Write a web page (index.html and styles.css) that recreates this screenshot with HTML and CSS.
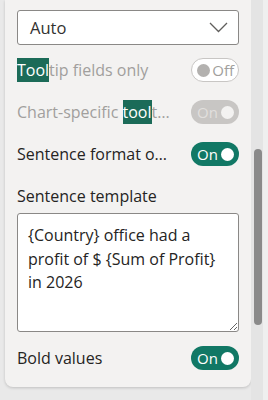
FILE: index.html
```html
<!DOCTYPE html>
<html>
<head>
<meta charset="utf-8">
<link rel="stylesheet" href="styles.css">
</head>
<body>
<div class="frame">
  <div class="panel">
    <div class="select">
      <span>Auto</span>
      <svg class="chev" width="19" height="11" viewBox="0 0 19 11"><path d="M1 1 L9.5 9.5 L18 1" fill="none" stroke="#605e5c" stroke-width="1.3"/></svg>
    </div>
    <div class="row">
      <span class="label dim"><mark>Tool</mark>tip fields only</span>
      <span class="toggle off"><i class="knob"></i><b>Off</b></span>
    </div>
    <div class="row">
      <span class="label dim">Chart-specific <mark>tool</mark>t…</span>
      <span class="toggle disabled"><b>On</b><i class="knob"></i></span>
    </div>
    <div class="row">
      <span class="label">Sentence format o…</span>
      <span class="toggle on"><b>On</b><i class="knob"></i></span>
    </div>
    <div class="field-label">Sentence template</div>
    <textarea class="area">{Country} office had a profit of $ {Sum of Profit} in 2026</textarea>
    <div class="row">
      <span class="label">Bold values</span>
      <span class="toggle on"><b>On</b><i class="knob"></i></span>
    </div>
  </div>
  <div class="scroll"><div class="thumb"></div></div>
  <div class="edge"></div>
</div>
</body>
</html>
```

FILE: styles.css
```css
* { box-sizing: border-box; }
html, body { margin: 0; padding: 0; }
body {
  width: 268px;
  height: 400px;
  overflow: hidden;
  background: #e9e9e9;
  font-family: "Open Sans", "Noto Sans", sans-serif;
  color: #252423;
}
.frame {
  display: flex;
  height: 400px;
}
.panel {
  margin-left: 5px;
  width: 246px;
  flex: none;
  height: 387px;
  background: #f3f2f1;
  border-radius: 0 0 8px 8px;
  box-shadow: 0 1px 3px rgba(0,0,0,0.18);
  padding: 10px 12px 0 12px;
  display: flex;
  flex-direction: column;
}
.select {
  height: 35px;
  flex: none;
  background: #fff;
  border: 1px solid #8a8886;
  border-radius: 3px;
  display: flex;
  align-items: center;
  justify-content: space-between;
  padding: 0 9px 0 12px;
  font-size: 16.5px;
  color: #323130;
  margin-bottom: 4px;
}
.chev { margin-right: 1px; }
.row {
  height: 42px;
  flex: none;
  display: flex;
  align-items: center;
  justify-content: space-between;
  font-size: 16px;
}
.label { white-space: nowrap; line-height: 24px; }
.dim { color: #a19f9d; }
mark {
  background: #1b6b58;
  color: #fff;
  display: inline-block;
  line-height: 24px;
}
.toggle {
  width: 48px;
  height: 24px;
  flex: none;
  border-radius: 12px;
  display: flex;
  align-items: center;
  justify-content: space-between;
  padding: 0 5px 0 6px;
  font-size: 15px;
}
.toggle b { font-weight: 400; }
.knob {
  width: 13px;
  height: 13px;
  border-radius: 50%;
  display: block;
}
.toggle.off {
  background: #fff;
  border: 1px solid #c8c6c4;
  color: #a19f9d;
  padding: 0 4px 0 5px;
}
.toggle.off .knob { background: #b3b1af; }
.toggle.disabled {
  background: #c8c6c4;
  color: #e1dfdd;
}
.toggle.disabled .knob { background: #f3f2f1; }
.toggle.on {
  background: #117865;
  color: #fff;
}
.toggle.on .knob { background: #fff; }
.field-label {
  height: 22px;
  flex: none;
  line-height: 22px;
  font-size: 16px;
  margin-top: 10px;
  margin-bottom: 6px;
}
.area {
  display: block;
  flex: none;
  width: 222px;
  height: 119px;
  background: #fff;
  border: 1px solid #8a8886;
  border-radius: 3px;
  padding: 10px 8px 10px 10px;
  font-family: "Open Sans", "Noto Sans", sans-serif;
  font-size: 16px;
  line-height: 23.5px;
  color: #252423;
  resize: both;
  overflow: hidden;
  margin: 0 0 5px 0;
}
.scroll {
  width: 12px;
  flex: none;
  background: #e4e4e4;
  height: 400px;
  padding: 149px 0 0 3px;
}
.thumb {
  width: 8px;
  height: 176px;
  background: #8a8a8a;
  border-radius: 4px;
}
.edge {
  flex: 1;
  background: #efefef;
}
```
